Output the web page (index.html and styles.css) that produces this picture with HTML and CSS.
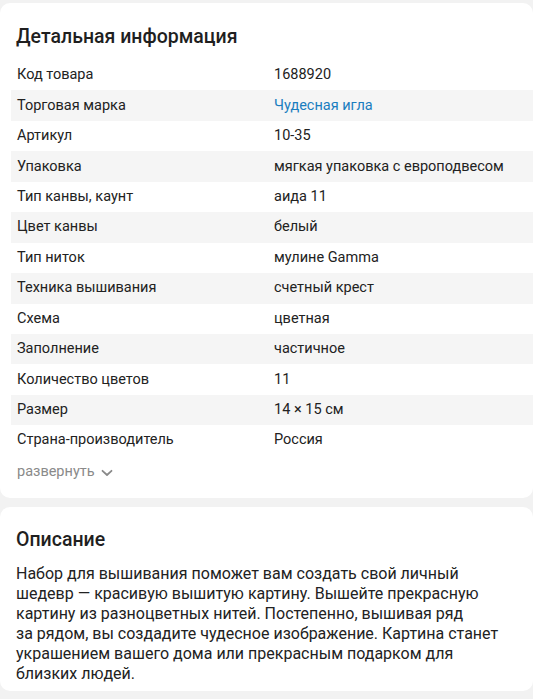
FILE: index.html
```html
<!DOCTYPE html>
<html lang="ru">
<head>
<meta charset="utf-8">
<link rel="stylesheet" href="styles.css">
</head>
<body>
<section class="card details">
  <h2 class="title">Детальная информация</h2>
  <div class="rows">
    <div class="row"><span class="label">Код товара</span><span class="value">1688920</span></div>
    <div class="row"><span class="label">Торговая марка</span><span class="value link">Чудесная игла</span></div>
    <div class="row"><span class="label">Артикул</span><span class="value">10-35</span></div>
    <div class="row"><span class="label">Упаковка</span><span class="value">мягкая упаковка с европодвесом</span></div>
    <div class="row"><span class="label">Тип канвы, каунт</span><span class="value">аида 11</span></div>
    <div class="row"><span class="label">Цвет канвы</span><span class="value">белый</span></div>
    <div class="row"><span class="label">Тип ниток</span><span class="value">мулине Gamma</span></div>
    <div class="row"><span class="label">Техника вышивания</span><span class="value">счетный крест</span></div>
    <div class="row"><span class="label">Схема</span><span class="value">цветная</span></div>
    <div class="row"><span class="label">Заполнение</span><span class="value">частичное</span></div>
    <div class="row"><span class="label">Количество цветов</span><span class="value">11</span></div>
    <div class="row"><span class="label">Размер</span><span class="value">14 × 15 см</span></div>
    <div class="row"><span class="label">Страна-производитель</span><span class="value">Россия</span></div>
  </div>
  <div class="expand">развернуть
    <svg class="chev" width="12" height="8" viewBox="0 0 12 8"><path d="M1.5 1.8 L6 6 L10.5 1.8" fill="none" stroke="#8a8a8a" stroke-width="1.8" stroke-linecap="round" stroke-linejoin="round"/></svg>
  </div>
</section>
<section class="card desc">
  <h2 class="title">Описание</h2>
  <p class="text">Набор для вышивания поможет вам создать свой личный шедевр — красивую вышитую картину. Вышейте прекрасную картину из разноцветных нитей. Постепенно, вышивая ряд за&nbsp;рядом, вы создадите чудесное изображение. Картина станет украшением вашего дома или прекрасным подарком для близких людей.</p>
</section>
</body>
</html>
```
FILE: styles.css
```css
* { box-sizing: border-box; }
html, body { margin: 0; padding: 0; }
body {
  background: #f2f2f2;
  font-family: Roboto, "Noto Sans", sans-serif;
  color: #222;
  padding-top: 3px;
  width: 533px;
}
.card {
  background: #fff;
  border-radius: 10px;
}
.details {
  padding: 22px 0 16px;
}
.title {
  margin: 0 16px;
  font-size: 19.5px;
  line-height: 24px;
  font-weight: 500;
  color: #1f1f1f;
}
.rows {
  margin-top: 11px;
  padding-left: 11px;
}
.row {
  display: grid;
  grid-template-columns: 263px 1fr;
  height: 30.45px;
  align-items: center;
  font-size: 14.5px;
  line-height: 20px;
}
.row:nth-child(even) { background: #f5f5f5; }
.label { padding-left: 6px; }
.link { color: #1a7dbf; }
.expand {
  margin: 6px 17px 0;
  font-size: 14.5px;
  line-height: 20px;
  color: #8a8a8a;
  display: flex;
  align-items: center;
  gap: 6px;
}
.chev { margin-top: 2px; }
.desc {
  margin-top: 9px;
  padding: 21px 16px 7px;
}
.desc .title { margin: 0; }
.text {
  margin: 12px 0 0;
  font-size: 16px;
  line-height: 20px;
  color: #222;
}
```
